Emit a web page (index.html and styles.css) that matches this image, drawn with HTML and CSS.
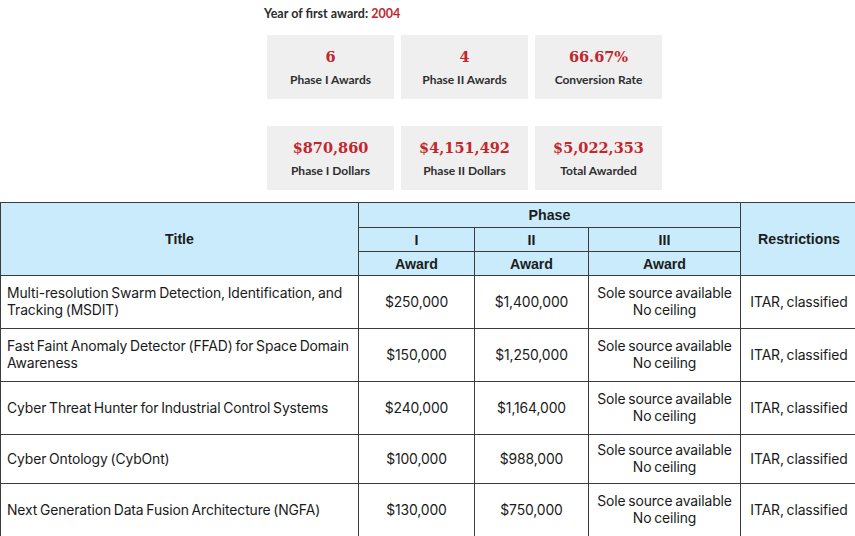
FILE: index.html
```html
<!DOCTYPE html>
<html>
<head>
<meta charset="utf-8">
<link rel="stylesheet" href="styles.css">
</head>
<body>
<div class="top">
  <div class="year">Year of first award: <span class="red">2004</span></div>
  <div class="cards row1">
    <div class="card"><div class="num">6</div><div class="lbl">Phase I Awards</div></div>
    <div class="card"><div class="num">4</div><div class="lbl">Phase II Awards</div></div>
    <div class="card"><div class="num">66.67%</div><div class="lbl">Conversion Rate</div></div>
  </div>
  <div class="cards row2">
    <div class="card"><div class="num">$870,860</div><div class="lbl">Phase I Dollars</div></div>
    <div class="card"><div class="num">$4,151,492</div><div class="lbl">Phase II Dollars</div></div>
    <div class="card"><div class="num">$5,022,353</div><div class="lbl">Total Awarded</div></div>
  </div>
</div>
<table class="awards">
  <colgroup>
    <col class="c-title"><col class="c-p1"><col class="c-p2"><col class="c-p3"><col class="c-res">
  </colgroup>
  <thead>
    <tr class="h1"><th rowspan="3">Title</th><th colspan="3">Phase</th><th rowspan="3">Restrictions</th></tr>
    <tr class="h2"><th>I</th><th>II</th><th>III</th></tr>
    <tr class="h3"><th>Award</th><th>Award</th><th>Award</th></tr>
  </thead>
  <tbody>
    <tr><td class="t">Multi-resolution Swarm Detection, Identification, and Tracking (MSDIT)</td><td>$250,000</td><td>$1,400,000</td><td>Sole source available<br>No ceiling</td><td>ITAR, classified</td></tr>
    <tr><td class="t">Fast Faint Anomaly Detector (FFAD) for Space Domain Awareness</td><td>$150,000</td><td>$1,250,000</td><td>Sole source available<br>No ceiling</td><td>ITAR, classified</td></tr>
    <tr><td class="t">Cyber Threat Hunter for Industrial Control Systems</td><td>$240,000</td><td>$1,164,000</td><td>Sole source available<br>No ceiling</td><td>ITAR, classified</td></tr>
    <tr class="short"><td class="t">Cyber Ontology (CybOnt)</td><td>$100,000</td><td>$988,000</td><td>Sole source available<br>No ceiling</td><td>ITAR, classified</td></tr>
    <tr><td class="t">Next Generation Data Fusion Architecture (NGFA)</td><td>$130,000</td><td>$750,000</td><td>Sole source available<br>No ceiling</td><td>ITAR, classified</td></tr>
  </tbody>
</table>
</body>
</html>
```

FILE: styles.css
```css
html, body {
  margin: 0;
  padding: 0;
  background: #fff;
  overflow: hidden;
}
.top {
  padding-left: 264px;
  padding-top: 6px;
  height: 202px;
  box-sizing: border-box;
  font-family: Lato, "Open Sans", sans-serif;
}
.year {
  font-size: 12.5px;
  font-weight: 700;
  color: #2b2b2b;
  line-height: 16px;
}
.red { color: #c1272d; }
.cards {
  display: flex;
  gap: 7px;
  padding-left: 3px;
}
.row1 { margin-top: 13px; }
.row2 { margin-top: 27px; }
.card {
  width: 127px;
  height: 64px;
  background: #efefef;
  display: flex;
  flex-direction: column;
  align-items: center;
  padding-top: 12px;
  box-sizing: border-box;
}
.num {
  font-family: "DejaVu Serif", "Liberation Serif", serif;
  font-weight: 700;
  font-size: 14.5px;
  line-height: 20px;
  color: #c1272d;
}
.lbl {
  margin-top: 6px;
  font-size: 12px;
  font-weight: 700;
  color: #2e2e2e;
  line-height: 14px;
}
table.awards {
  border-collapse: collapse;
  width: 857px;
  table-layout: fixed;
  margin-left: 0;
  font-family: Inter, "Noto Sans", sans-serif;
  color: #1a1a1a;
}
.c-title { width: 358px; }
.c-p1 { width: 116px; }
.c-p2 { width: 114px; }
.c-p3 { width: 152px; }
.c-res { width: 117px; }
.awards th, .awards td {
  border: 1.5px solid #3c3c3c;
  text-align: center;
  padding: 0 4px;
}
.awards th {
  background: #c9ebfb;
  font-family: "Liberation Sans", Arial, sans-serif;
  font-weight: 700;
  font-size: 14.2px;
  color: #1c1c1c;
}
.h1 th { height: 24px; }
.h2 th { height: 23px; }
.h3 th { height: 23px; }
.awards td {
  font-size: 13.9px;
  line-height: 17px;
  height: 52px;
  letter-spacing: -0.12px;
  word-spacing: -1px;
}
.awards tr.short td { height: 48px; }
.awards td.t {
  text-align: left;
  padding-left: 6px;
}
```
